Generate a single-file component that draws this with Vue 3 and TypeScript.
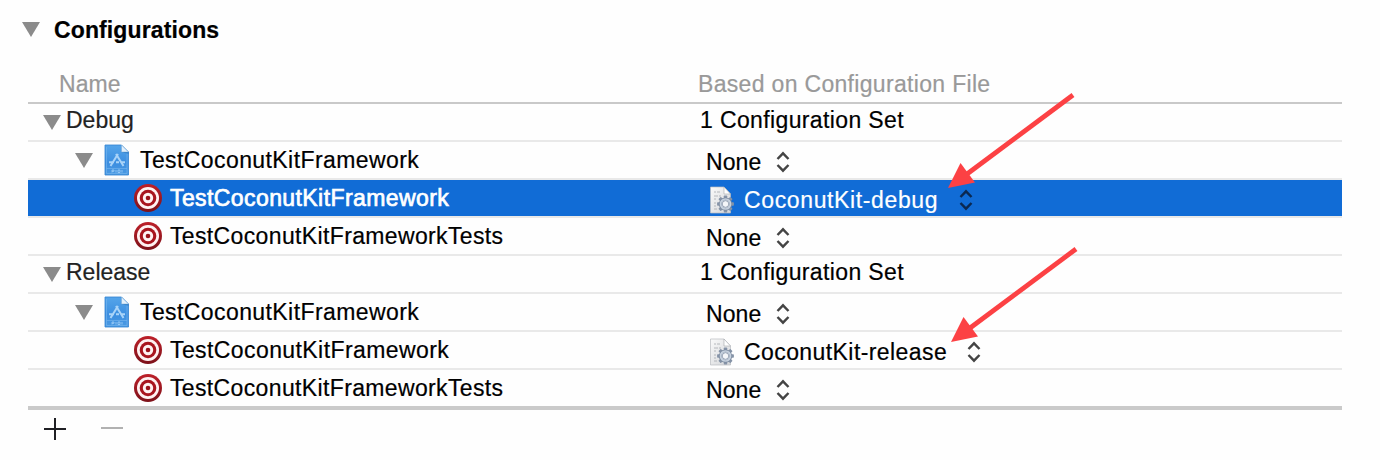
<script setup lang="ts">
type Row = {
  name: string
  level: 0 | 1 | 2
  value: string
  selected?: boolean
}

const rows: Row[] = [
  { name: 'Debug', level: 0, value: '1 Configuration Set' },
  { name: 'TestCoconutKitFramework', level: 1, value: 'None' },
  { name: 'TestCoconutKitFramework', level: 2, value: 'CoconutKit-debug', selected: true },
  { name: 'TestCoconutKitFrameworkTests', level: 2, value: 'None' },
  { name: 'Release', level: 0, value: '1 Configuration Set' },
  { name: 'TestCoconutKitFramework', level: 1, value: 'None' },
  { name: 'TestCoconutKitFramework', level: 2, value: 'CoconutKit-release' },
  { name: 'TestCoconutKitFrameworkTests', level: 2, value: 'None' },
]

const teeth = [0, 45, 90, 135, 180, 225, 270, 315]
const arrows = [
  { x: 948, y: 188 },
  { x: 951, y: 342 },
]
</script>

<template>
  <main class="panel">
    <h1 class="title">
      <svg class="tri" viewBox="0 0 18 15"><path d="M0 0H18L9 15Z" /></svg>
      <span>Configurations</span>
    </h1>

    <section class="table">
      <header class="head">
        <span class="head-name">Name</span>
        <span class="head-file">Based on Configuration File</span>
      </header>

      <div v-for="(row, i) in rows" :key="i" class="row" :class="['level' + row.level, { selected: row.selected }]">
        <div class="name">
          <svg v-if="row.level < 2" class="tri" viewBox="0 0 18 15"><path d="M0 0H18L9 15Z" /></svg>
          <svg v-if="row.level === 1" class="project" viewBox="0 0 26 32">
            <defs>
              <linearGradient :id="'blue' + i" x1="0" y1="0" x2="0" y2="1">
                <stop offset="0" stop-color="#55a5ea" />
                <stop offset=".6" stop-color="#3c8ee0" />
                <stop offset="1" stop-color="#4b9ae2" />
              </linearGradient>
            </defs>
            <path d="M1 1H17.500L24.500 8V31H1Z" :fill="'url(#blue' + i + ')'" stroke="#3383d2" stroke-width=".8" />
            <path d="M2.500 3V29.500H23V9M2.500 24.500H23" fill="none" stroke="#78b7ee" stroke-width=".6" />
            <path d="M17.500 1V8H24.500Z" fill="#e4f0fa" stroke="#78a9d2" stroke-width=".5" />
            <path d="M17.500 8H24.500V10Z" fill="#246fb9" opacity=".5" />
            <path d="M12 10L19.500 22M14 10L6.500 22M5 18.200H10M12 18.200H15M17.500 18.200H21" fill="none" stroke="#a9d3f8" stroke-width="2" />
            <path d="M8 26V28.500M8 26H10V27.300H8M12 26V28.500M14 26H16V28.500H14ZM18 26V28.500" fill="none" stroke="#add7fa" stroke-width=".7" />
          </svg>
          <svg v-if="row.level === 2" class="target" viewBox="0 0 28 29">
            <defs>
              <linearGradient :id="'red' + i" x1="0" y1="0" x2="0" y2="1">
                <stop offset="0" stop-color="#bd2029" />
                <stop offset="1" stop-color="#7d121a" />
              </linearGradient>
            </defs>
            <circle cx="14" cy="14" r="14" :fill="'url(#red' + i + ')'" />
            <circle cx="14" cy="14" r="11" fill="#fff2f2" />
            <circle cx="14" cy="14" r="8.300" fill="#a9151e" />
            <circle cx="14" cy="14" r="5.200" fill="#fff2f2" />
            <circle cx="14" cy="14" r="2.300" fill="#9a121b" />
          </svg>
          <span class="label" :class="{ long: row.name.endsWith('Tests') }">{{ row.name }}</span>
        </div>

        <div v-if="row.level === 0" class="value">{{ row.value }}</div>
        <div v-else class="value popup" :class="{ file: row.value !== 'None' }">
          <svg v-if="row.value !== 'None'" class="config" viewBox="0 0 24 28">
            <defs>
              <linearGradient :id="'paper' + i" x1="0" y1="0" x2="1" y2="1">
                <stop offset="0" stop-color="#fafafa" />
                <stop offset="1" stop-color="#d3d5d8" />
              </linearGradient>
            </defs>
            <path d="M.5 1H14L20.500 8V27H.5Z" :fill="'url(#paper' + i + ')'" stroke="#b9bcc0" stroke-width=".7" />
            <path d="M14 1V8H20.500Z" fill="#fff" stroke="#a5a8ac" stroke-width=".6" />
            <path d="M4 6H6M7 6H10M4 10H8M9 10H11M4 13H6M4 17H6M4 20H6M4 23H7" stroke="#a6a9ae" stroke-width=".8" />
            <g transform="translate(15.500 18)">
              <rect v-for="a in teeth" :key="a" x="-1.700" y="-8.400" width="3.400" height="4" rx=".7" :transform="'rotate(' + a + ')'" fill="#8593a7" />
              <circle r="5.300" fill="#d6dfea" stroke="#7c8ba0" stroke-width="2.600" />
              <circle r="5" fill="none" stroke="#c7d2df" stroke-width="1.700" />
              <circle r="3.300" fill="#f4f6f9" stroke="#8593a7" stroke-width=".8" />
            </g>
          </svg>
          <span class="choice">{{ row.value }}</span>
          <svg class="stepper" viewBox="0 0 14 22"><path d="M1.500 8L7 2.300L12.500 8M1.500 14L7 19.700L12.500 14" /></svg>
        </div>
      </div>
    </section>

    <footer class="tools">
      <svg class="tool" viewBox="0 0 22 22"><path d="M0 11H22M11 0V22" stroke="#202024" stroke-width="2" /></svg>
      <svg class="tool" viewBox="0 0 22 22"><path d="M0 10H22" stroke="#b1b1b1" stroke-width="2" /></svg>
    </footer>

    <svg class="arrows" viewBox="0 0 1380 460">
      <g v-for="a in arrows" :key="a.y" :transform="'translate(' + a.x + ' ' + a.y + ')'">
        <path d="M15 -11L125 -93" stroke="#fc4144" stroke-width="4.800" />
        <path d="M0 0L12.500 -25L27 -5.500Z" fill="#fc4144" />
      </g>
    </svg>
  </main>
</template>

<style>
body {
  margin: 0;
  background: #fefefe;
}
</style>

<style scoped>
.panel {
  position: relative;
  box-sizing: border-box;
  width: 1380px;
  height: 460px;
  padding: 12px 38px 0 28px;
  overflow: hidden;
  font: 23px/37px "Liberation Sans", Arial, sans-serif;
  letter-spacing: 0.41px;
  white-space: nowrap;
  color: #000;
  -webkit-text-stroke: 0.2px currentColor;
}
svg {
  display: block;
  flex: none;
}
.tri {
  width: 18px;
  height: 15px;
  fill: #8b8b8b;
}
.title {
  display: flex;
  height: 36px;
  margin: 0 0 0 -6px;
  font-size: 23px;
  letter-spacing: 0.12px;
}
.title .tri {
  margin: 10px 14px 0 0;
}
.head {
  display: flex;
  height: 36px;
  padding-top: 18px;
  border-bottom: 2px solid #c9c9c9;
  color: #999;
  letter-spacing: 0.32px;
}
.head-name {
  flex: none;
  box-sizing: border-box;
  width: 670px;
  padding-left: 31px;
  letter-spacing: 0.1px;
}
.row {
  display: flex;
  height: 36px;
  border-bottom: 2px solid #e9e9e9;
}
.row:last-child {
  border-bottom: 4px solid #cacaca;
}
.name {
  display: flex;
  flex: none;
  box-sizing: border-box;
  width: 678px;
}
.long {
  letter-spacing: 0.36px;
}
.level0 {
  letter-spacing: 0.37px;
}
.level0 .name {
  padding-left: 15px;
  color: #222;
  letter-spacing: 0;
}
.level0 .tri {
  margin: 11px 5px 0 0;
}
.level0 .label,
.level0 .value {
  margin-top: -2px;
}
.level0 .value {
  margin-left: -6px;
}
.level1 .name {
  padding-left: 47px;
}
.level1 .tri {
  margin: 11px 11px 0 0;
}
.project {
  width: 26px;
  height: 32px;
  margin: 2px 10px 0 0;
}
.level2 .name {
  padding-left: 106px;
}
.target {
  width: 28px;
  height: 29px;
  margin: 4px 8px 0 0;
}
.popup {
  display: flex;
}
.choice {
  flex: none;
  width: 57px;
  margin-top: 2px;
  letter-spacing: 0.1px;
}
.stepper {
  width: 14px;
  height: 22px;
  margin: 9px 0 0 13px;
  fill: none;
  stroke: #444;
  stroke-width: 2.4;
}
.config {
  width: 24px;
  height: 28px;
  margin: 6px 10px 0 4px;
}
.file .choice {
  width: 203px;
  letter-spacing: 0.42px;
}
.file .stepper {
  margin-left: 20px;
}
.selected {
  background: #116cd6;
  background-clip: padding-box;
  color: #fff;
}
.selected .label {
  -webkit-text-stroke: 0.7px #fff;
}
.selected .file .choice {
  width: 195px;
  letter-spacing: 0.63px;
}
.selected .stepper {
  stroke: #0b2850;
}
.tools {
  display: flex;
  gap: 35px;
  padding: 8px 0 0 16px;
}
.tool {
  width: 22px;
  height: 22px;
}
.arrows {
  position: absolute;
  top: 0;
  left: 0;
  width: 1380px;
  height: 460px;
  pointer-events: none;
}
</style>
